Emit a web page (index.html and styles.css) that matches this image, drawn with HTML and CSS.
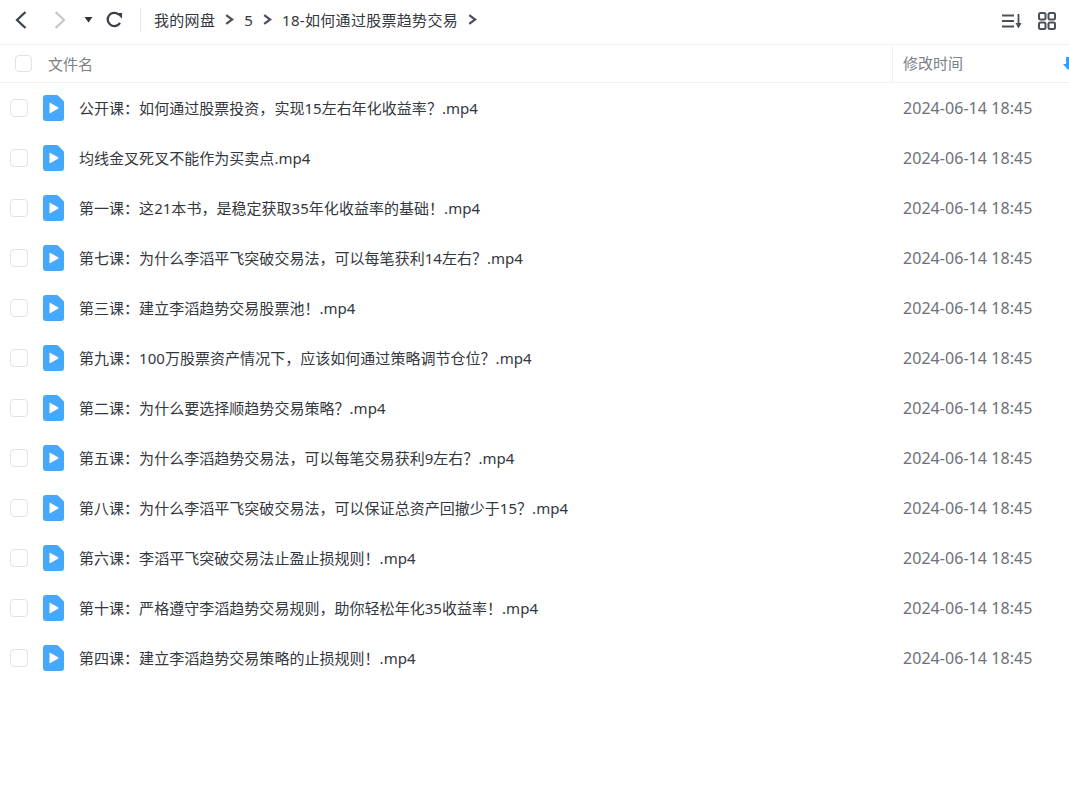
FILE: index.html
```html
<!DOCTYPE html>
<html lang="zh-CN">
<head>
  <meta charset="UTF-8">
  <title>我的网盘</title>
  <link rel="stylesheet" href="styles.css">
</head>
<body>
  <svg class="defs">
    <symbol id="video" viewBox="0 0 21 26">
      <path class="doc" d="M3 0h10.500q1 0 1.700.7l5.100 5.100q.7.700.7 1.700V23a3 3 0 0 1-3 3H3a3 3 0 0 1-3-3V3a3 3 0 0 1 3-3z"/>
      <path class="play" d="M6.500 8.500q0-1 1-.5l7.500 4.300q1 .700 0 1.400l-7.500 4.300q-1 .500-1-.5z"/>
    </symbol>
    <symbol id="chevron" viewBox="0 0 8 10">
      <path d="M1 1 6.500 5 1 9"/>
    </symbol>
  </svg>

  <header class="toolbar">
    <div class="nav-btns">
      <svg class="ico ico-back" viewBox="0 0 14 20"><path d="M11.5 2 3 10l8.500 8"/></svg>
      <svg class="ico ico-forward" viewBox="0 0 14 20"><path d="M2.500 2 11 10l-8.500 8"/></svg>
      <svg class="ico-drop" viewBox="0 0 10 8"><path d="M0.500 1h9L5 7.500z"/></svg>
      <svg class="ico ico-refresh" viewBox="0 0 18 18"><path d="M14.800 12.500A7 7 0 1 1 13.500 3.800"/><path class="fill" d="M10.500 2h6.500v6z"/></svg>
    </div>
    <nav class="crumbs">
      <span>我的网盘</span>
      <svg class="sep"><use href="#chevron"/></svg>
      <span>5</span>
      <svg class="sep"><use href="#chevron"/></svg>
      <span>18-如何通过股票趋势交易</span>
      <svg class="sep"><use href="#chevron"/></svg>
    </nav>
    <div class="view-btns">
      <svg class="ico-sort" viewBox="0 0 22 16"><path d="M1 2.500h12M1 8h12M1 13.500h12M17.500 1v10"/><path class="fill" d="M14.500 10h6L17.500 15.500z"/></svg>
      <svg class="ico-grid" viewBox="0 0 18 18"><rect x="1" y="1" width="6.500" height="6.500" rx="1.500"/><rect x="10.500" y="1" width="6.500" height="6.500" rx="1.500"/><rect x="1" y="10.500" width="6.500" height="6.500" rx="1.500"/><rect x="10.500" y="10.500" width="6.500" height="6.500" rx="1.500"/></svg>
    </div>
  </header>

  <div class="list-head">
    <span class="check check-head"></span>
    <div class="head-name">文件名</div>
    <div class="head-time">
      修改时间
      <svg class="sort-arrow" viewBox="0 0 10 14"><path d="M3 0h4v7h3L5 13 0 7h3z"/></svg>
    </div>
  </div>

  <main class="file-list">
    <div class="row"><span class="check"></span><svg class="file-ico"><use href="#video"/></svg><span class="name">公开课：如何通过股票投资，实现15左右年化收益率？.mp4</span><span class="time">2024-06-14 18:45</span></div>
    <div class="row"><span class="check"></span><svg class="file-ico"><use href="#video"/></svg><span class="name">均线金叉死叉不能作为买卖点.mp4</span><span class="time">2024-06-14 18:45</span></div>
    <div class="row"><span class="check"></span><svg class="file-ico"><use href="#video"/></svg><span class="name">第一课：这21本书，是稳定获取35年化收益率的基础！.mp4</span><span class="time">2024-06-14 18:45</span></div>
    <div class="row"><span class="check"></span><svg class="file-ico"><use href="#video"/></svg><span class="name">第七课：为什么李滔平飞突破交易法，可以每笔获利14左右？.mp4</span><span class="time">2024-06-14 18:45</span></div>
    <div class="row"><span class="check"></span><svg class="file-ico"><use href="#video"/></svg><span class="name">第三课：建立李滔趋势交易股票池！.mp4</span><span class="time">2024-06-14 18:45</span></div>
    <div class="row"><span class="check"></span><svg class="file-ico"><use href="#video"/></svg><span class="name">第九课：100万股票资产情况下，应该如何通过策略调节仓位？.mp4</span><span class="time">2024-06-14 18:45</span></div>
    <div class="row"><span class="check"></span><svg class="file-ico"><use href="#video"/></svg><span class="name">第二课：为什么要选择顺趋势交易策略？.mp4</span><span class="time">2024-06-14 18:45</span></div>
    <div class="row"><span class="check"></span><svg class="file-ico"><use href="#video"/></svg><span class="name">第五课：为什么李滔趋势交易法，可以每笔交易获利9左右？.mp4</span><span class="time">2024-06-14 18:45</span></div>
    <div class="row"><span class="check"></span><svg class="file-ico"><use href="#video"/></svg><span class="name">第八课：为什么李滔平飞突破交易法，可以保证总资产回撤少于15？.mp4</span><span class="time">2024-06-14 18:45</span></div>
    <div class="row"><span class="check"></span><svg class="file-ico"><use href="#video"/></svg><span class="name">第六课：李滔平飞突破交易法止盈止损规则！.mp4</span><span class="time">2024-06-14 18:45</span></div>
    <div class="row"><span class="check"></span><svg class="file-ico"><use href="#video"/></svg><span class="name">第十课：严格遵守李滔趋势交易规则，助你轻松年化35收益率！.mp4</span><span class="time">2024-06-14 18:45</span></div>
    <div class="row"><span class="check"></span><svg class="file-ico"><use href="#video"/></svg><span class="name">第四课：建立李滔趋势交易策略的止损规则！.mp4</span><span class="time">2024-06-14 18:45</span></div>
  </main>
</body>
</html>
```

FILE: styles.css
```css
* {
  box-sizing: border-box;
  margin: 0;
  padding: 0;
}

body {
  font-family: "Noto Sans", "Noto Sans CJK SC", sans-serif;
  font-size: 15px;
  line-height: 20px;
  color: #3b3f47;
  background: #fff;
  overflow: hidden;
}

svg {
  display: block;
  flex: none;
}

.defs {
  display: none;
}

/* toolbar */
.toolbar {
  display: flex;
  align-items: center;
  height: 45px;
  padding: 0 13px 5px 14px;
  border-bottom: 1px solid #f3f3f3;
}

.nav-btns {
  display: flex;
  align-items: center;
  height: 24px;
  padding-right: 17px;
  border-right: 1px solid #e8e8e8;
}

.ico {
  fill: none;
  stroke-width: 2.2;
}

.ico-back {
  width: 14px;
  height: 20px;
  stroke: #3a3f48;
}

.ico-forward {
  width: 14px;
  height: 20px;
  margin-left: 25px;
  stroke: #c4c6ca;
}

.ico-drop {
  width: 9px;
  height: 7px;
  margin-left: 17px;
  fill: #2f333a;
}

.ico-refresh {
  width: 17px;
  height: 17px;
  margin-left: 13px;
  stroke: #3a3f48;
  stroke-width: 2.4;
}

.ico-refresh .fill {
  fill: #3a3f48;
  stroke: none;
}

.crumbs {
  display: flex;
  align-items: center;
  gap: 10px;
  margin-left: 13px;
  color: #33373e;
  letter-spacing: 0.3px;
  white-space: nowrap;
}

.sep {
  width: 9px;
  height: 11px;
  fill: none;
  stroke: #4a4e55;
  stroke-width: 2;
}

.view-btns {
  display: flex;
  align-items: center;
  gap: 15px;
  margin-left: auto;
  padding-top: 2px;
}

.ico-sort {
  width: 22px;
  height: 16px;
  fill: none;
  stroke: #4b5058;
  stroke-width: 1.8;
}

.ico-sort .fill {
  fill: #4b5058;
  stroke: none;
}

.ico-grid {
  width: 18px;
  height: 18px;
  fill: none;
  stroke: #4b5058;
  stroke-width: 2;
}

/* list */
.list-head {
  display: flex;
  align-items: center;
  height: 38px;
  border-bottom: 1px solid #f3f3f3;
  color: #7c7f85;
}

.check {
  flex: none;
  width: 18px;
  height: 18px;
  margin-left: 10px;
  border: 1px solid #dfe2e6;
  border-radius: 4px;
  background: #fff;
}

.check-head {
  width: 17px;
  height: 17px;
  margin-left: 15px;
}

.head-name {
  flex: 1;
  margin-left: 16px;
}

.head-time {
  position: relative;
  width: 177px;
  height: 100%;
  padding-left: 10px;
  line-height: 37px;
  border-left: 1px solid #f0f0f0;
}

.sort-arrow {
  position: absolute;
  top: 12px;
  left: 170px;
  width: 10px;
  height: 14px;
  fill: #3b9cf5;
}

.row {
  display: flex;
  align-items: center;
  height: 50px;
}

.file-ico {
  width: 21px;
  height: 26px;
  margin-left: 15px;
}

.doc {
  fill: #45a8fc;
}

.play {
  fill: #fff;
}

.name {
  flex: 1;
  margin-left: 15px;
  color: #33373e;
  letter-spacing: 0.03px;
  white-space: nowrap;
}

.time {
  width: 166px;
  color: #6d7178;
  font-size: 16px;
  letter-spacing: 0.05px;
}
```
